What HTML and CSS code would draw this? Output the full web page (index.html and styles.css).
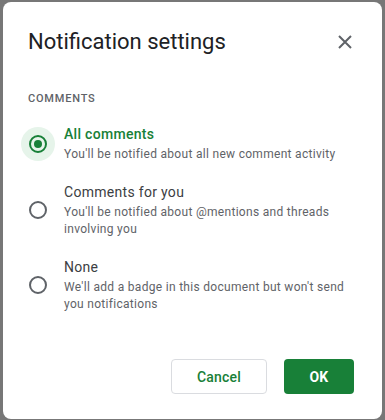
FILE: index.html
```html
<!DOCTYPE html>
<html lang="en">
<head>
    <meta charset="UTF-8">
    <meta name="viewport" content="width=device-width, initial-scale=1.0">
    <title>Notification settings</title>
    <link rel="stylesheet" href="styles.css">
</head>
<body>
    <div class="dialog">
        <header class="dialog-header">
            <h1>Notification settings</h1>
            <span class="close-button">
                <svg width="14" height="14" viewBox="0 0 14 14">
                    <path d="M1 1 L13 13 M13 1 L1 13" stroke="#5f6368" stroke-width="2" fill="none"/>
                </svg>
            </span>
        </header>

        <div class="section-label">COMMENTS</div>

        <div class="options">
            <div class="option selected">
                <span class="radio"></span>
                <div class="option-text">
                    <div class="option-title">All comments</div>
                    <div class="option-desc">You'll be notified about all new comment activity</div>
                </div>
            </div>
            <div class="option">
                <span class="radio"></span>
                <div class="option-text">
                    <div class="option-title">Comments for you</div>
                    <div class="option-desc">You'll be notified about @mentions and threads involving you</div>
                </div>
            </div>
            <div class="option">
                <span class="radio"></span>
                <div class="option-text">
                    <div class="option-title">None</div>
                    <div class="option-desc">We'll add a badge in this document but won't send you notifications</div>
                </div>
            </div>
        </div>

        <footer class="dialog-footer">
            <button class="btn btn-cancel">Cancel</button>
            <button class="btn btn-ok">OK</button>
        </footer>
    </div>
</body>
</html>
```

FILE: styles.css
```css
body {
    margin: 0;
    padding: 2px 3px 0 3px;
    background-color: #777777;
    font-family: Roboto, 'Liberation Sans', Arial, sans-serif;
}
.dialog {
    background: #fff;
    height: 417px;
    border-radius: 8px;
    display: flex;
    flex-direction: column;
    padding: 0 28px 0 25px;
    box-sizing: border-box;
}
.dialog-header {
    display: flex;
    align-items: center;
    justify-content: space-between;
    padding-top: 22px;
    height: 36px;
}
h1 {
    margin: 0;
    font-size: 22px;
    font-weight: 400;
    color: #202124;
    line-height: 36px;
}
.close-button {
    display: flex;
    margin-right: 2px;
}
.section-label {
    margin-top: 31px;
    font-size: 11px;
    font-weight: 500;
    letter-spacing: 0.8px;
    color: #5f6368;
    line-height: 16px;
}
.options {
    display: flex;
    flex-direction: column;
    gap: 19px;
    margin-top: 17px;
}
.option {
    display: flex;
    align-items: center;
    isolation: isolate;
}
.radio {
    position: relative;
    width: 14px;
    height: 14px;
    border: 2px solid #5f6368;
    border-radius: 50%;
    margin-left: 1px;
    margin-right: 17px;
    flex-shrink: 0;
}
.selected .radio {
    border-color: #188038;
}
/* light halo + inner dot on the checked radio */
.selected .radio::before {
    content: "";
    position: absolute;
    left: -10px;
    top: -10px;
    width: 34px;
    height: 34px;
    border-radius: 50%;
    background: #e6f4ea;
    z-index: -1;
}
.selected .radio::after {
    content: "";
    position: absolute;
    left: 3px;
    top: 3px;
    width: 8px;
    height: 8px;
    border-radius: 50%;
    background: #188038;
}
.option-title {
    font-size: 14px;
    line-height: 20px;
    letter-spacing: 0.3px;
    color: #3c4043;
}
.selected .option-title {
    color: #188038;
    font-weight: 500;
}
.option-desc {
    font-size: 12px;
    line-height: 17px;
    letter-spacing: 0.3px;
    margin-top: 2px;
    color: #5f6368;
}
.dialog-footer {
    margin-top: auto;
    margin-bottom: 25px;
    display: flex;
    justify-content: flex-end;
    gap: 17px;
}
.btn {
    height: 35px;
    border-radius: 4px;
    font-family: Roboto, 'Liberation Sans', Arial, sans-serif;
    font-size: 14px;
    font-weight: 500;
    letter-spacing: 0.2px;
    cursor: pointer;
}
.btn-cancel {
    width: 96px;
    background: #fff;
    border: 1px solid #dadce0;
    color: #188038;
}
.btn-ok {
    width: 70px;
    background: #188038;
    border: none;
    color: #fff;
    font-weight: 700;
}
```
